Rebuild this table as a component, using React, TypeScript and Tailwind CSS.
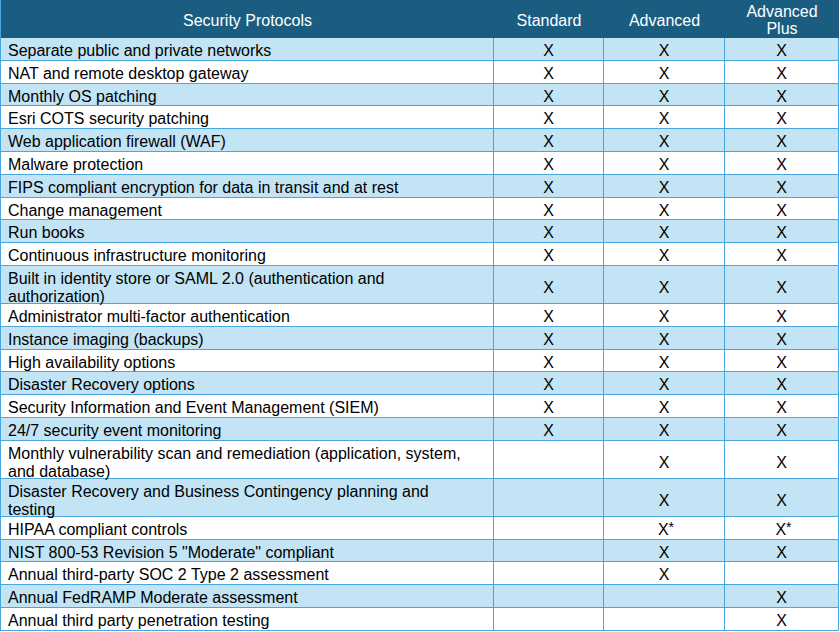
type Row = { label: string; s: string; a: string; p: string; tall?: boolean };

const rows: Row[] = [
  { label: "Separate public and private networks", s: "X", a: "X", p: "X" },
  { label: "NAT and remote desktop gateway", s: "X", a: "X", p: "X" },
  { label: "Monthly OS patching", s: "X", a: "X", p: "X" },
  { label: "Esri COTS security patching", s: "X", a: "X", p: "X" },
  { label: "Web application firewall (WAF)", s: "X", a: "X", p: "X" },
  { label: "Malware protection", s: "X", a: "X", p: "X" },
  { label: "FIPS compliant encryption for data in transit and at rest", s: "X", a: "X", p: "X" },
  { label: "Change management", s: "X", a: "X", p: "X" },
  { label: "Run books", s: "X", a: "X", p: "X" },
  { label: "Continuous infrastructure monitoring", s: "X", a: "X", p: "X" },
  { label: "Built in identity store or SAML 2.0 (authentication and authorization)", s: "X", a: "X", p: "X", tall: true },
  { label: "Administrator multi-factor authentication", s: "X", a: "X", p: "X" },
  { label: "Instance imaging (backups)", s: "X", a: "X", p: "X" },
  { label: "High availability options", s: "X", a: "X", p: "X" },
  { label: "Disaster Recovery options", s: "X", a: "X", p: "X" },
  { label: "Security Information and Event Management (SIEM)", s: "X", a: "X", p: "X" },
  { label: "24/7 security event monitoring", s: "X", a: "X", p: "X" },
  { label: "Monthly vulnerability scan and remediation (application, system, and database)", s: "", a: "X", p: "X", tall: true },
  { label: "Disaster Recovery and Business Contingency planning and testing", s: "", a: "X", p: "X", tall: true },
  { label: "HIPAA compliant controls", s: "", a: "X*", p: "X*" },
  { label: 'NIST 800-53 Revision 5 "Moderate" compliant', s: "", a: "X", p: "X" },
  { label: "Annual third-party SOC 2 Type 2 assessment", s: "", a: "X", p: "" },
  { label: "Annual FedRAMP Moderate assessment", s: "", a: "", p: "X" },
  { label: "Annual third party penetration testing", s: "", a: "", p: "X" },
];

function Mark({ v }: { v: string }) {
  if (v === "X*")
    return (
      <span className="pl-[4px]">
        X<span className="relative -top-[3px] text-[14px]">*</span>
      </span>
    );
  return <span>{v}</span>;
}

const cols = "grid grid-cols-[493px_110px_121px_114px]";
const cell = "flex items-center pt-[4px] border-r border-[#4aa6df]";

export default function App() {
  return (
    <div className="w-[840px] h-[632px] bg-white font-['Liberation_Sans',Arial,sans-serif] text-black">
      <div className="w-[839px] border-l border-[#4aa6df]">
        {/* Header */}
        <div className={`${cols} h-[38px] bg-[#1a5d80] text-white text-[16px] leading-[17px]`}>
          <div className="flex items-center justify-center pt-[2px]">Security Protocols</div>
          <div className="flex items-center justify-center pt-[2px]">Standard</div>
          <div className="flex items-center justify-center pt-[2px]">Advanced</div>
          <div className="flex items-center justify-center text-center pt-[2px]">
            Advanced
            <br />
            Plus
          </div>
        </div>

        {rows.map((r, i) => (
          <div
            key={i}
            className={`${cols} border-b border-[#4aa6df] text-[16px] leading-[18px] ${
              r.tall ? "h-[38px]" : "h-[22.8px]"
            } ${i % 2 === 0 ? "bg-[#c3e4f5]" : "bg-white"}`}
          >
            <div className={`${cell} pl-[7px] pr-[18px]`}>{r.label}</div>
            <div className={`${cell} justify-center`}>
              <Mark v={r.s} />
            </div>
            <div className={`${cell} justify-center`}>
              <Mark v={r.a} />
            </div>
            <div className={`${cell} justify-center`}>
              <Mark v={r.p} />
            </div>
          </div>
        ))}
      </div>
    </div>
  );
}
